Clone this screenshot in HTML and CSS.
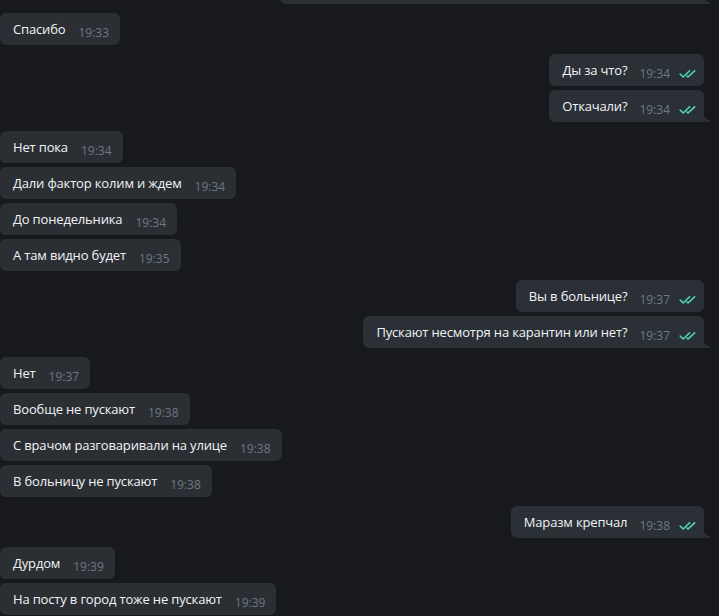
FILE: index.html
```html
<!DOCTYPE html>
<html lang="ru">
<head>
  <meta charset="UTF-8" />
  <title>Чат</title>
  <link rel="stylesheet" href="styles.css">
</head>
<body>

<svg width="0" height="0" class="defs">
  <symbol id="dbl" viewBox="0 0 18 8">
    <path d="M1.2 4 L4.2 7 L10.6 0.8 M8 6 L9 7 L15.6 0.8" fill="none" stroke="currentColor" stroke-width="1.6" stroke-linecap="round" stroke-linejoin="round"/>
  </symbol>
</svg>

<div class="chat">

  <div class="group out">
    <div class="msg last"><span class="text">Понятно, а врачи что говорят, когда её уже выпишут?</span><span class="time">19:32</span><svg class="check"><use href="#dbl"/></svg></div>
  </div>

  <div class="group in">
    <div class="msg"><span class="text">Спасибо</span><span class="time">19:33</span></div>
  </div>

  <div class="group out">
    <div class="msg"><span class="text">Ды за что?</span><span class="time">19:34</span><svg class="check"><use href="#dbl"/></svg></div>
    <div class="msg last"><span class="text">Откачали?</span><span class="time">19:34</span><svg class="check"><use href="#dbl"/></svg></div>
  </div>

  <div class="group in">
    <div class="msg"><span class="text">Нет пока</span><span class="time">19:34</span></div>
    <div class="msg"><span class="text">Дали фактор колим и ждем</span><span class="time">19:34</span></div>
    <div class="msg"><span class="text">До понедельника</span><span class="time">19:34</span></div>
    <div class="msg"><span class="text">А там видно будет</span><span class="time">19:35</span></div>
  </div>

  <div class="group out">
    <div class="msg"><span class="text">Вы в больнице?</span><span class="time">19:37</span><svg class="check"><use href="#dbl"/></svg></div>
    <div class="msg last"><span class="text">Пускают несмотря на карантин или нет?</span><span class="time">19:37</span><svg class="check"><use href="#dbl"/></svg></div>
  </div>

  <div class="group in">
    <div class="msg"><span class="text">Нет</span><span class="time">19:37</span></div>
    <div class="msg"><span class="text">Вообще не пускают</span><span class="time">19:38</span></div>
    <div class="msg"><span class="text">С врачом разговаривали на улице</span><span class="time">19:38</span></div>
    <div class="msg"><span class="text">В больницу не пускают</span><span class="time">19:38</span></div>
  </div>

  <div class="group out">
    <div class="msg last"><span class="text">Маразм крепчал</span><span class="time">19:38</span><svg class="check"><use href="#dbl"/></svg></div>
  </div>

  <div class="group in">
    <div class="msg"><span class="text">Дурдом</span><span class="time">19:39</span></div>
    <div class="msg"><span class="text">На посту в город тоже не пускают</span><span class="time">19:39</span></div>
  </div>

</div>

</body>
</html>
```

FILE: styles.css
```css
html, body { margin: 0; height: 100%; overflow: hidden; }
body { background: #18191d; font-family: "Open Sans", "Noto Sans", sans-serif; color: #f1f3f5; }
.defs { position: absolute; }

.chat { display: flex; flex-direction: column; gap: 9px; margin-top: -28px; }
.group { display: flex; flex-direction: column; gap: 4px; }
.group.in { align-items: flex-start; }
.group.out { align-items: flex-end; padding-right: 15px; }

.msg { position: relative; display: flex; align-items: flex-end; height: 32px; box-sizing: border-box; padding: 7px 11px 5px 13px; border-radius: 6px; background: #2b2f34; white-space: nowrap; }
.out .msg { background: #2a3036; padding-right: 7px; }
.text { font-size: 13px; line-height: 18px; letter-spacing: -0.16px; align-self: flex-start; }
.time { font-size: 12px; line-height: 14px; color: #6c7782; margin-left: 13px; }
.out .time { margin-left: 12px; color: #6d7a85; }
.check { width: 18px; height: 8px; color: #4fd6bf; margin-left: 9px; margin-bottom: 3px; }

.out .msg.last { border-bottom-right-radius: 0; }
.out .msg.last::after { content: ""; position: absolute; right: -6px; bottom: 0; width: 6px; height: 8px; background: radial-gradient(circle at 100% 0, transparent 6px, #2a3036 6.5px); }
```
